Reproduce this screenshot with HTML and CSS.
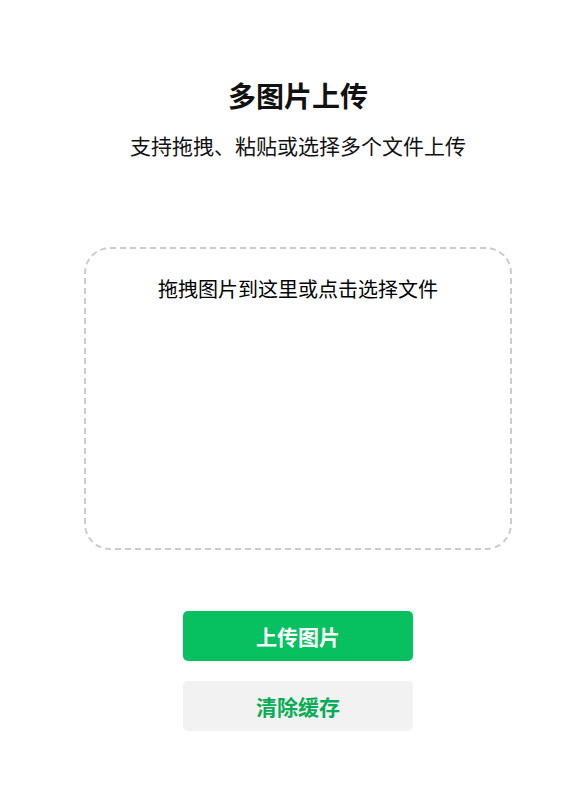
FILE: index.html
```html
<!DOCTYPE html>
<html lang="zh-CN">
<head>
    <meta charset="UTF-8">
    <meta name="viewport" content="width=device-width, initial-scale=1.0">
    <title>多图片上传</title>
    <link rel="stylesheet" href="styles.css">
</head>
<body>
    <div class="page">
        <h1 class="title">多图片上传</h1>
        <p class="subtitle">支持拖拽、粘贴或选择多个文件上传</p>

        <div class="drop-zone">
            <div class="drop-tip">拖拽图片到这里或点击选择文件</div>
        </div>

        <div class="actions">
            <button class="btn btn-primary">上传图片</button>
            <button class="btn btn-default">清除缓存</button>
        </div>
    </div>
</body>
</html>
```

FILE: styles.css
```css
* {
    margin: 0;
    padding: 0;
    box-sizing: border-box;
}

body {
    font-family: "Noto Sans CJK SC", "Noto Sans", sans-serif;
    background: #fff;
    color: #111;
}

.page {
    padding: 0 0 0 20px;
    display: flex;
    flex-direction: column;
    align-items: center;
}

.title {
    margin-top: 76px;
    font-size: 28px;
    line-height: 38px;
    font-weight: 700;
}

.subtitle {
    margin-top: 15px;
    font-size: 21px;
    line-height: 32px;
    color: #111;
}

.drop-zone {
    margin-top: 86px;
    width: 428px;
    height: 303px;
    border: 2px dashed #ccc;
    border-radius: 26px;
    padding-top: 25px;
    text-align: center;
}

.drop-tip {
    font-size: 20px;
    line-height: 30px;
    color: #000;
}

.actions {
    margin-top: 61px;
    display: flex;
    flex-direction: column;
    gap: 20px;
}

.btn {
    width: 230px;
    height: 50px;
    border: none;
    border-radius: 5px;
    font-family: inherit;
    font-size: 21px;
    font-weight: 700;
    cursor: pointer;
}

.btn-primary {
    background: #07c160;
    color: #fff;
}

.btn-default {
    background: #f2f2f2;
    color: #06ad56;
}
```
